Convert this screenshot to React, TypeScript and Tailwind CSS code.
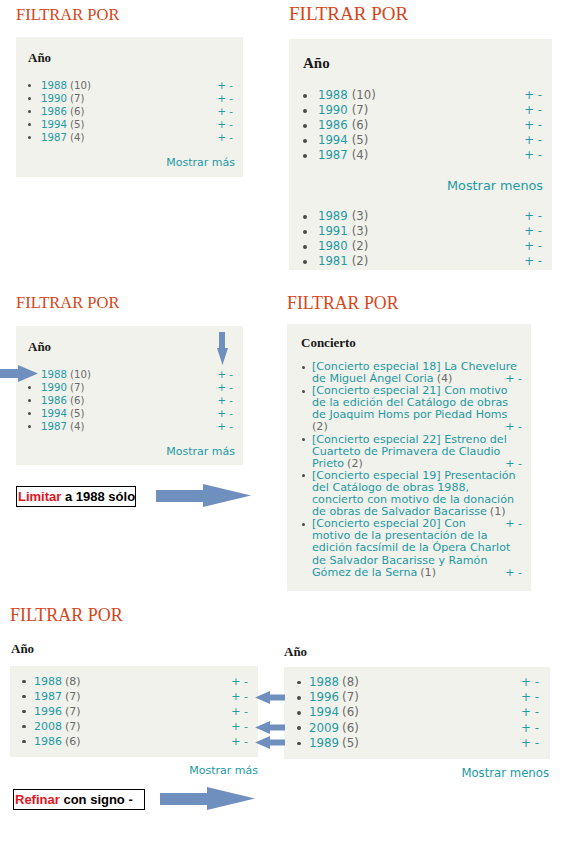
import React from "react";

const SANS = "font-['DejaVu_Sans','Verdana',sans-serif]";
const SERIF = "font-['Liberation_Serif','Times_New_Roman',serif]";
const TEAL = "text-[#2299a3]";
const GRAY = "text-[#6a6a6a]";
const BOX = "bg-[#f2f2ec]";

type Y = [string, string];

function Dot({ cls }: { cls: string }) {
  return <span className={`rounded-full bg-[#4a4a4a] ${cls}`} />;
}

function Row1({ y }: { y: Y }) {
  return (
    <li className={`flex items-center h-[13px] text-[10.2px] leading-[13px] ${SANS}`}>
      <span className="w-[13px] flex items-center">
        <Dot cls="size-[3px]" />
      </span>
      <span className={TEAL}>{y[0]}</span>
      <span className={`${GRAY} ml-[3px]`}>({y[1]})</span>
      <span className={`ml-auto ${TEAL}`}>+ -</span>
    </li>
  );
}

function Row2({ y }: { y: Y }) {
  return (
    <li className={`flex items-center h-[15px] text-[11.7px] leading-[15px] ${SANS}`}>
      <span className="w-[15px] flex items-center">
        <Dot cls="size-[4px]" />
      </span>
      <span className={TEAL}>{y[0]}</span>
      <span className={`${GRAY} ml-[4px]`}>({y[1]})</span>
      <span className={`ml-auto ${TEAL}`}>+ -</span>
    </li>
  );
}

function Row5({ y }: { y: Y }) {
  return (
    <li className={`flex items-center h-[15px] text-[11px] leading-[15px] ${SANS}`}>
      <span className="w-[12px] flex items-center">
        <Dot cls="size-[3.5px]" />
      </span>
      <span className={TEAL}>{y[0]}</span>
      <span className={`${GRAY} ml-[3px]`}>({y[1]})</span>
      <span className={`ml-auto ${TEAL}`}>+ -</span>
    </li>
  );
}

function Row6({ y }: { y: Y }) {
  return (
    <li className={`flex items-center h-[15.2px] text-[11.8px] leading-[15.2px] ${SANS}`}>
      <span className="w-[12px] flex items-center">
        <Dot cls="size-[3.5px]" />
      </span>
      <span className={TEAL}>{y[0]}</span>
      <span className={`${GRAY} ml-[3px]`}>({y[1]})</span>
      <span className={`ml-auto ${TEAL}`}>+ -</span>
    </li>
  );
}

const TOP5: Y[] = [
  ["1988", "10"],
  ["1990", "7"],
  ["1986", "6"],
  ["1994", "5"],
  ["1987", "4"],
];

function Title({ cls }: { cls: string }) {
  return <div className={`${SERIF} text-[#d6461b] ${cls}`}>FILTRAR POR</div>;
}

function SmallPanel({ h }: { h: string }) {
  return (
    <div className={`${BOX} ${h} w-[227px] pt-[13px] pl-[12px] pr-[10px] flex flex-col`}>
      <div className={`${SERIF} font-bold text-[13px] leading-[16px] text-[#1a1a1a]`}>Año</div>
      <ul className="mt-[13px]">
        {TOP5.map((y) => (
          <Row1 key={y[0]} y={y} />
        ))}
      </ul>
      <div className={`mt-[12px] mr-[-2px] text-right text-[11px] leading-[14px] ${SANS} ${TEAL}`}>
        Mostrar más
      </div>
    </div>
  );
}

function BigArrow() {
  return (
    <svg width="95" height="24" viewBox="0 0 95 24" className="block">
      <polygon points="0,6 47,6 47,0 95,11.5 47,23 47,18 0,18" fill="#6f8fbf" />
    </svg>
  );
}

function LeftArrow({ top }: { top: string }) {
  return (
    <svg width="30" height="13" viewBox="0 0 30 13" className={`absolute left-[255px] ${top}`}>
      <polygon points="0,6.5 15,0 15,3.5 30,3.5 30,9.5 15,9.5 15,13" fill="#6f8fbf" />
    </svg>
  );
}

type Line = { t: string; c?: string; pm?: boolean };
const CONC: Line[][] = [
  [{ t: "[Concierto especial 18] La Chevelure" }, { t: "de Miguel Ángel Coria", c: "4", pm: true }],
  [
    { t: "[Concierto especial 21] Con motivo" },
    { t: "de la edición del Catálogo de obras" },
    { t: "de Joaquim Homs por Piedad Homs" },
    { t: "", c: "2", pm: true },
  ],
  [
    { t: "[Concierto especial 22] Estreno del" },
    { t: "Cuarteto de Primavera de Claudio" },
    { t: "Prieto", c: "2", pm: true },
  ],
  [
    { t: "[Concierto especial 19] Presentación" },
    { t: "del Catálogo de obras 1988," },
    { t: "concierto con motivo de la donación" },
    { t: "de obras de Salvador Bacarisse", c: "1" },
  ],
  [
    { t: "[Concierto especial 20] Con", pm: true },
    { t: "motivo de la presentación de la" },
    { t: "edición facsímil de la Ópera Charlot" },
    { t: "de Salvador Bacarisse y Ramón" },
    { t: "Gómez de la Serna", c: "1", pm: true },
  ],
];

function ConciertoPanel() {
  return (
    <div className={`${BOX} w-[244px] h-[267px] pt-[11px] pl-[14px] pr-[9px] flex flex-col`}>
      <div className={`${SERIF} font-bold text-[13px] leading-[16px] text-[#1a1a1a]`}>Concierto</div>
      <ul className="mt-[10px]">
        {CONC.map((lines, i) => (
          <li key={i} className="flex">
            <span className="w-[11px] h-[12.1px] flex items-center shrink-0">
              <Dot cls="size-[3px] ml-[1px]" />
            </span>
            <div className="flex-1">
              {lines.map((l, j) => (
                <div
                  key={j}
                  className={`flex h-[12.1px] text-[11.1px] leading-[12.1px] whitespace-nowrap ${SANS}`}
                >
                  <span className={TEAL}>{l.t}</span>
                  {l.c && (
                    <span className={`${GRAY} ${l.t ? "ml-[3px]" : ""}`}>({l.c})</span>
                  )}
                  {l.pm && <span className={`ml-auto ${TEAL}`}>+ -</span>}
                </div>
              ))}
            </div>
          </li>
        ))}
      </ul>
    </div>
  );
}

function Label({ red, rest }: { red: string; rest: string }) {
  return (
    <div className="w-[132px] h-[21px] border border-black bg-white flex items-center pl-[1px]">
      <span className="font-['Liberation_Sans','Arial',sans-serif] font-bold text-[13px] leading-[19px] whitespace-nowrap">
        <span className="text-[#e3141c]">{red}</span>
        <span className="text-black"> {rest}</span>
      </span>
    </div>
  );
}

export default function App() {
  return (
    <div className="w-[563px] h-[852px] bg-white relative overflow-hidden">
      {/* Row 1 */}
      <div className="h-[285px] flex">
        <div className="ml-[16px] w-[227px] pt-[5px] flex flex-col">
          <Title cls="text-[16.5px] leading-[20px]" />
          <div className="mt-[12px]">
            <SmallPanel h="h-[140px]" />
          </div>
        </div>
        <div className="ml-[46px] w-[263px] pt-[3px] flex flex-col">
          <Title cls="text-[19px] leading-[22px]" />
          <div className={`${BOX} mt-[14px] w-[263px] h-[231px] pt-[15px] pl-[14px] pr-[10px] flex flex-col`}>
            <div className={`${SERIF} font-bold text-[15px] leading-[18px] text-[#1a1a1a]`}>Año</div>
            <ul className="mt-[16px]">
              {TOP5.map((y) => (
                <Row2 key={y[0]} y={y} />
              ))}
            </ul>
            <div className={`mt-[15px] mr-[-1px] text-right text-[12.8px] leading-[16px] ${SANS} ${TEAL}`}>
              Mostrar menos
            </div>
            <ul className="mt-[15px]">
              {(
                [
                  ["1989", "3"],
                  ["1991", "3"],
                  ["1980", "2"],
                  ["1981", "2"],
                ] as Y[]
              ).map((y) => (
                <Row2 key={y[0]} y={y} />
              ))}
            </ul>
          </div>
        </div>
      </div>

      {/* Row 2 */}
      <div className="h-[310px] flex relative">
        <div className="ml-[16px] w-[227px] pt-[8px] flex flex-col">
          <Title cls="text-[16.5px] leading-[20px]" />
          <div className="mt-[13px]">
            <SmallPanel h="h-[139px]" />
          </div>
          <div className="mt-[19px] flex items-center">
            <Label red="Limitar" rest="a 1988 sólo" />
            <div className="ml-[20px]">
              <BigArrow />
            </div>
          </div>
        </div>
        <div className="ml-[44px] w-[244px] pt-[8px] flex flex-col">
          <Title cls="text-[17.8px] leading-[21px]" />
          <div className="mt-[10px]">
            <ConciertoPanel />
          </div>
        </div>
        {/* annotation arrows */}
        <svg width="38" height="17" viewBox="0 0 38 17" className="absolute left-0 top-[80px]">
          <polygon points="0,4 18,4 18,0 38,8.5 18,17 18,13 0,13" fill="#6f8fbf" />
        </svg>
        <svg width="11" height="33" viewBox="0 0 11 33" className="absolute left-[217px] top-[47px]">
          <polygon points="2,0 8,0 8,16 11,16 5.5,33 0,16 2,16" fill="#6f8fbf" />
        </svg>
      </div>

      {/* Row 3 */}
      <div className="flex relative h-[257px]">
        <div className="ml-[10px] w-[248px] pt-[10px] flex flex-col">
          <Title cls="text-[18px] leading-[21px]" />
          <div className={`${SERIF} mt-[15px] ml-[1px] font-bold text-[13px] leading-[16px] text-[#1a1a1a]`}>Año</div>
          <div className={`${BOX} mt-[9px] h-[91px] pt-[8px] pl-[12px] pr-[10px]`}>
            <ul>
              {(
                [
                  ["1988", "8"],
                  ["1987", "7"],
                  ["1996", "7"],
                  ["2008", "7"],
                  ["1986", "6"],
                ] as Y[]
              ).map((y) => (
                <Row5 key={y[0]} y={y} />
              ))}
            </ul>
          </div>
          <div className={`mt-[7px] text-right text-[11px] leading-[14px] ${SANS} ${TEAL}`}>Mostrar más</div>
          <div className="mt-[9px] ml-[3px] flex items-center">
            <Label red="Refinar" rest="con signo -" />
            <div className="ml-[15px]">
              <BigArrow />
            </div>
          </div>
        </div>
        <div className="ml-[26px] w-[266px] pt-[49px] flex flex-col">
          <div className={`${SERIF} font-bold text-[13px] leading-[16px] text-[#1a1a1a]`}>Año</div>
          <div className={`${BOX} mt-[7px] h-[92px] pt-[8px] pl-[13px] pr-[11px]`}>
            <ul>
              {(
                [
                  ["1988", "8"],
                  ["1996", "7"],
                  ["1994", "6"],
                  ["2009", "6"],
                  ["1989", "5"],
                ] as Y[]
              ).map((y) => (
                <Row6 key={y[0]} y={y} />
              ))}
            </ul>
          </div>
          <div className={`mt-[7px] mr-[1px] text-right text-[11.7px] leading-[15px] ${SANS} ${TEAL}`}>
            Mostrar menos
          </div>
        </div>
        <LeftArrow top="top-[96px]" />
        <LeftArrow top="top-[126px]" />
        <LeftArrow top="top-[141px]" />
      </div>
    </div>
  );
}
